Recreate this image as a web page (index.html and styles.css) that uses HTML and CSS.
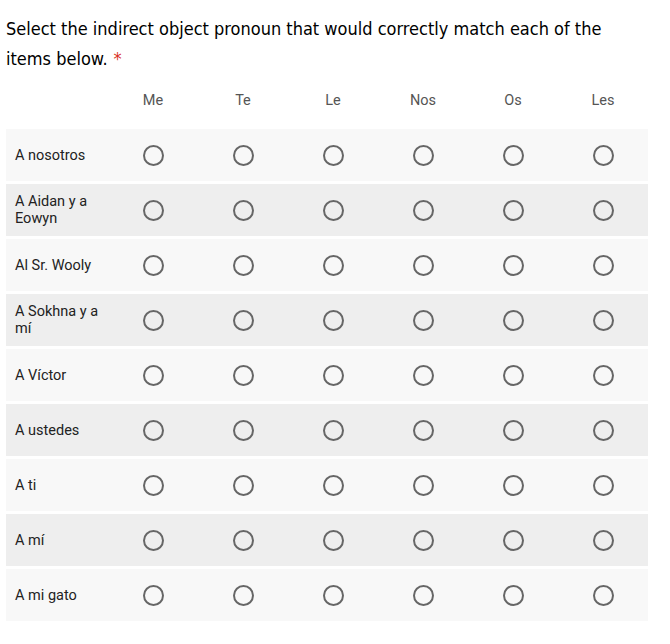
FILE: index.html
```html
<!DOCTYPE html>
<html>
<head>
<meta charset="utf-8">
<link rel="stylesheet" href="styles.css">
</head>
<body>
<div class="title">Select the indirect object pronoun that would correctly match each of the items below.<span class="req">*</span></div>
<div class="grid">
  <div class="row head">
    <div class="label"></div>
    <div class="col">Me</div><div class="col">Te</div><div class="col">Le</div><div class="col">Nos</div><div class="col">Os</div><div class="col">Les</div>
  </div>
  <div class="row odd"><div class="label">A nosotros</div><div class="cell"><span class="radio"></span></div><div class="cell"><span class="radio"></span></div><div class="cell"><span class="radio"></span></div><div class="cell"><span class="radio"></span></div><div class="cell"><span class="radio"></span></div><div class="cell"><span class="radio"></span></div></div>
  <div class="row even"><div class="label">A Aidan y a Eowyn</div><div class="cell"><span class="radio"></span></div><div class="cell"><span class="radio"></span></div><div class="cell"><span class="radio"></span></div><div class="cell"><span class="radio"></span></div><div class="cell"><span class="radio"></span></div><div class="cell"><span class="radio"></span></div></div>
  <div class="row odd"><div class="label">Al Sr. Wooly</div><div class="cell"><span class="radio"></span></div><div class="cell"><span class="radio"></span></div><div class="cell"><span class="radio"></span></div><div class="cell"><span class="radio"></span></div><div class="cell"><span class="radio"></span></div><div class="cell"><span class="radio"></span></div></div>
  <div class="row even"><div class="label">A Sokhna y a mí</div><div class="cell"><span class="radio"></span></div><div class="cell"><span class="radio"></span></div><div class="cell"><span class="radio"></span></div><div class="cell"><span class="radio"></span></div><div class="cell"><span class="radio"></span></div><div class="cell"><span class="radio"></span></div></div>
  <div class="row odd"><div class="label">A Víctor</div><div class="cell"><span class="radio"></span></div><div class="cell"><span class="radio"></span></div><div class="cell"><span class="radio"></span></div><div class="cell"><span class="radio"></span></div><div class="cell"><span class="radio"></span></div><div class="cell"><span class="radio"></span></div></div>
  <div class="row even"><div class="label">A ustedes</div><div class="cell"><span class="radio"></span></div><div class="cell"><span class="radio"></span></div><div class="cell"><span class="radio"></span></div><div class="cell"><span class="radio"></span></div><div class="cell"><span class="radio"></span></div><div class="cell"><span class="radio"></span></div></div>
  <div class="row odd"><div class="label">A ti</div><div class="cell"><span class="radio"></span></div><div class="cell"><span class="radio"></span></div><div class="cell"><span class="radio"></span></div><div class="cell"><span class="radio"></span></div><div class="cell"><span class="radio"></span></div><div class="cell"><span class="radio"></span></div></div>
  <div class="row even"><div class="label">A mí</div><div class="cell"><span class="radio"></span></div><div class="cell"><span class="radio"></span></div><div class="cell"><span class="radio"></span></div><div class="cell"><span class="radio"></span></div><div class="cell"><span class="radio"></span></div><div class="cell"><span class="radio"></span></div></div>
  <div class="row odd"><div class="label">A mi gato</div><div class="cell"><span class="radio"></span></div><div class="cell"><span class="radio"></span></div><div class="cell"><span class="radio"></span></div><div class="cell"><span class="radio"></span></div><div class="cell"><span class="radio"></span></div><div class="cell"><span class="radio"></span></div></div>
</div>
</body>
</html>
```
FILE: styles.css
```css
html, body {
  margin: 0;
  padding: 0;
  background: #ffffff;
}
body {
  padding: 14px 6px 0 6px;
}
.title {
  font-family: "DejaVu Sans Condensed", "DejaVu Sans", sans-serif;
  font-stretch: condensed;
  font-size: 18px;
  line-height: 30px;
  color: #000000;
  width: 640px;
}
.req {
  color: #d93025;
  margin-left: 6px;
}
.grid {
  display: flex;
  flex-direction: column;
  gap: 3px;
  width: 642px;
  font-family: Roboto, "Liberation Sans", sans-serif;
  font-size: 14.5px;
}
.row {
  display: grid;
  grid-template-columns: 102px repeat(6, 90px);
  align-items: center;
  height: 52px;
}
.odd { background: #f8f8f8; }
.even { background: #eeeeee; }
.col {
  text-align: center;
  color: #555555;
  font-size: 14.5px;
}
.label {
  padding-left: 9px;
  padding-right: 6px;
  color: #222222;
  line-height: 17px;
}
.cell {
  display: flex;
  justify-content: center;
  align-items: center;
}
.radio {
  box-sizing: border-box;
  width: 21px;
  height: 21px;
  border: 2px solid #666666;
  border-radius: 50%;
}
```
